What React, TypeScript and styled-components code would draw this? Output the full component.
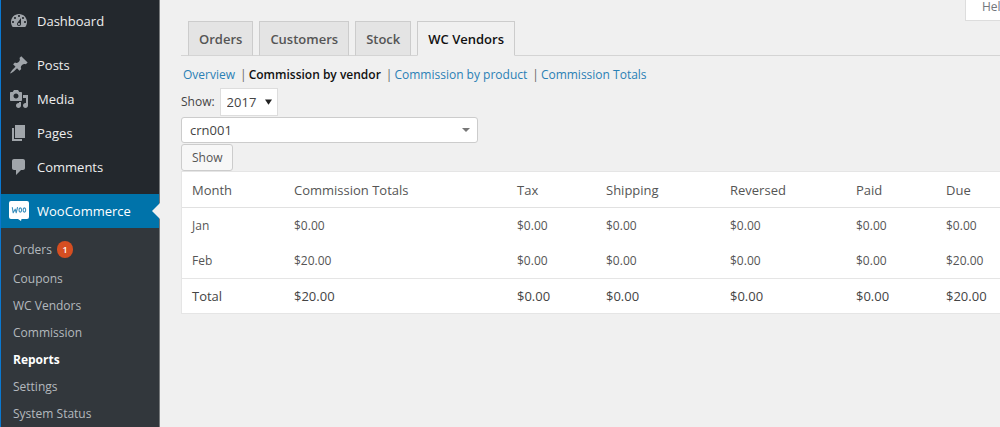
import React from 'react';
import styled, { createGlobalStyle } from 'styled-components';

const GlobalStyle = createGlobalStyle`
  *, *::before, *::after { box-sizing: border-box; }
  body {
    margin: 0;
    background: #f0f0f0;
    color: #444;
    font-family: 'Segoe UI', 'Open Sans', 'Noto Sans', sans-serif;
    font-size: 13px;
    line-height: 20px;
  }
  ul { list-style: none; margin: 0; padding: 0; }
  a { text-decoration: none; }
  button, select { font: inherit; }
`;

const Page = styled.div`
  display: grid;
  grid-template-columns: 160px minmax(0, 1fr);
  min-height: 100vh;
  overflow: hidden;
`;

const Sidebar = styled.nav`
  background: #23282d;
  border-left: 1px solid #0a78d0;
  border-right: 1px solid #777a7c;
  padding-top: 4px;
`;

const MenuGroup = styled.ul`
  & + & { margin-top: 10px; }
`;

const MenuLink = styled.a<{ $active?: boolean }>`
  position: relative;
  display: flex;
  align-items: center;
  gap: 8px;
  height: 34px;
  padding-left: 8px;
  color: ${(p) => (p.$active ? '#fff' : '#eee')};
  background: ${(p) => (p.$active ? '#0073aa' : 'transparent')};
`;

const MenuIcon = styled.svg`
  width: 20px;
  height: 20px;
  fill: #a0a5aa;
`;

const Pointer = styled.svg`
  position: absolute;
  right: -1px;
  top: 9px;
  width: 8px;
  height: 16px;
  fill: #f0f0f0;
`;

const SubMenu = styled.ul`
  background: #32373c;
  padding-top: 6px;
`;

const SubLink = styled.a<{ $active?: boolean; $tall?: boolean }>`
  display: flex;
  align-items: center;
  gap: 5px;
  height: ${(p) => (p.$tall ? 31 : 27)}px;
  padding-left: 12px;
  font-size: 12px;
  font-weight: ${(p) => (p.$active ? 700 : 400)};
  color: ${(p) => (p.$active ? '#fff' : '#b4b9be')};
`;

const Badge = styled.span`
  width: 16px;
  height: 17px;
  border-radius: 8px;
  background: #d54e21;
  color: #fff;
  font-size: 9px;
  font-weight: 600;
  line-height: 17px;
  text-align: center;
`;

const Main = styled.main`
  display: flex;
  flex-direction: column;
  padding-left: 21px;
  min-width: 0;
`;

const TopBar = styled.div`
  display: flex;
  justify-content: flex-end;
  height: 21px;
`;

const HelpTab = styled.button`
  align-self: flex-start;
  height: 21px;
  margin-right: -40px;
  padding: 0 16px 7px;
  border: 1px solid #ddd;
  border-top: 0;
  background: #fff;
  color: #72777c;
  font-size: 12px;
  line-height: 13px;
  width: 75px;
  text-align: left;
  white-space: nowrap;
`;

const Tabs = styled.nav`
  display: flex;
  gap: 6px;
  padding-left: 7px;
  border-bottom: 1px solid #d4d4d4;
`;

const Tab = styled.a<{ $active?: boolean }>`
  height: 35px;
  margin-bottom: -1px;
  padding: 0 10px;
  border: 1px solid #ccc;
  border-bottom-color: ${(p) => (p.$active ? '#f0f0f0' : '#d4d4d4')};
  background: ${(p) => (p.$active ? '#f0f0f0' : '#e4e4e4')};
  color: ${(p) => (p.$active ? '#111' : '#555')};
  font-weight: 600;
  line-height: 34px;
`;

const ReportLinks = styled.ul`
  display: flex;
  padding-left: 2px;
  margin-top: 9px;
  font-size: 12px;
  color: #666;

  li + li::before { content: '|'; padding: 0 2px 0 5px; }
`;

const ReportLink = styled.a<{ $active?: boolean }>`
  color: ${(p) => (p.$active ? '#111' : '#2a80b5')};
  font-weight: ${(p) => (p.$active ? 600 : 400)};
`;

const Filters = styled.form`
  display: flex;
  flex-direction: column;
  align-items: flex-start;
  gap: 1px;
  margin-top: 3px;
`;

const YearRow = styled.div`
  display: flex;
  align-items: center;
  gap: 5px;
  font-size: 12px;
`;

const SelectBox = styled.span<{ $wide?: boolean }>`
  position: relative;
  display: block;
  width: ${(p) => (p.$wide ? '297px' : '58px')};
  max-width: 100%;

  select {
    display: block;
    appearance: none;
    width: 100%;
    height: ${(p) => (p.$wide ? 26 : 28)}px;
    padding: 0 ${(p) => (p.$wide ? 8 : 6)}px;
    border: 1px solid ${(p) => (p.$wide ? '#ccc' : '#ddd')};
    border-radius: ${(p) => (p.$wide ? 3 : 0)}px;
    background: #fff;
    color: #444;
    font-size: 13px;
  }

  svg {
    position: absolute;
    right: ${(p) => (p.$wide ? 8 : 6)}px;
    top: 11px;
    width: ${(p) => (p.$wide ? 8 : 7)}px;
    height: 6px;
    fill: ${(p) => (p.$wide ? '#777' : '#222')};
    pointer-events: none;
  }
`;

const ShowButton = styled.button`
  height: 27px;
  padding: 0 10px;
  border: 1px solid #ccc;
  border-radius: 3px;
  background: #f7f7f7;
  color: #555;
  font-size: 12px;
`;

const Report = styled.table`
  width: 100%;
  table-layout: fixed;
  border-collapse: separate;
  border-spacing: 0;
  border: 1px solid #e5e5e5;
  border-right: 0;
  background: #fff;
  color: #555;

  th, td {
    height: 35px;
    padding: 0 0 0 10px;
    font-weight: 400;
    text-align: left;
    white-space: nowrap;
  }
  thead th { height: 36px; border-bottom: 1px solid #e1e1e1; }
  tbody th, tbody td { font-size: 12px; }
  tfoot th, tfoot td { border-top: 1px solid #e5e5e5; color: #444; }
`;

const Column = styled.col<{ $width?: number }>`
  width: ${(p) => (p.$width ? `${p.$width}px` : 'auto')};
`;

const icons = {
  dashboard:
    'M3.76 16h12.48c1.1-1.37 1.76-3.11 1.76-5 0-4.42-3.58-8-8-8s-8 3.58-8 8c0 1.89.66 3.63 1.76 5zM10 4c.55 0 1 .45 1 1s-.45 1-1 1-1-.45-1-1 .45-1 1-1zM6 6c.55 0 1 .45 1 1s-.45 1-1 1-1-.45-1-1 .45-1 1-1zm8 0c.55 0 1 .45 1 1s-.45 1-1 1-1-.45-1-1 .45-1 1-1zm-5.37 5.55L12 7v6c0 1.1-.9 2-2 2s-2-.9-2-2c0-.57.24-1.08.63-1.45zM4 10c.55 0 1 .45 1 1s-.45 1-1 1-1-.45-1-1 .45-1 1-1zm12 0c.55 0 1 .45 1 1s-.45 1-1 1-1-.45-1-1 .45-1 1-1zm-5 3c0-.55-.45-1-1-1s-1 .45-1 1 .45 1 1 1 1-.45 1-1z',
  posts:
    'M10.44 3.02l1.82-1.82 6.36 6.35-1.83 1.82c-1.05-.68-2.48-.57-3.41.36l-.75.75c-.92.93-1.04 2.35-.35 3.41l-1.83 1.82-2.41-2.41-2.8 2.79c-.42.42-3.38 2.71-3.8 2.29s1.86-3.39 2.28-3.81l2.79-2.79L4.1 9.36l1.83-1.82c1.05.69 2.48.57 3.4-.36l.75-.75c.93-.92 1.05-2.35.36-3.41z',
  media:
    'M13 11V4c0-.55-.45-1-1-1h-1.67L9 1H5L3.67 3H2c-.55 0-1 .45-1 1v7c0 .55.45 1 1 1h10c.55 0 1-.45 1-1zM7 4.5c1.38 0 2.5 1.12 2.5 2.5S8.38 9.5 7 9.5 4.5 8.38 4.5 7 5.62 4.5 7 4.5zM14 6h5v10.5c0 1.38-1.12 2.5-2.5 2.5S14 17.88 14 16.5s1.12-2.5 2.5-2.5c.17 0 .34.02.5.05V9h-3V6zm-4 8.05V13h2v3.5c0 1.38-1.12 2.5-2.5 2.5S7 17.88 7 16.5 8.12 14 9.5 14c.17 0 .34.02.5.05z',
  pages: 'M6 15V2h10v13H6zm-1 1h8v2H3V5h2v11z',
  comments:
    'M5 2h9c1.1 0 2 .9 2 2v7c0 1.1-.9 2-2 2h-2l-5 5v-5H5c-1.1 0-2-.9-2-2V4c0-1.1.9-2 2-2z',
};

const contentMenu: { label: string; icon: keyof typeof icons }[] = [
  { label: 'Posts', icon: 'posts' },
  { label: 'Media', icon: 'media' },
  { label: 'Pages', icon: 'pages' },
  { label: 'Comments', icon: 'comments' },
];

const storeMenu = ['Orders', 'Coupons', 'WC Vendors', 'Commission', 'Reports', 'Settings', 'System Status'];
const tabs = ['Orders', 'Customers', 'Stock', 'WC Vendors'];
const reports = ['Overview', 'Commission by vendor', 'Commission by product', 'Commission Totals'];
const columns: { label: string; width?: number }[] = [
  { label: 'Month', width: 102 },
  { label: 'Commission Totals', width: 223 },
  { label: 'Tax', width: 89 },
  { label: 'Shipping', width: 124 },
  { label: 'Reversed', width: 126 },
  { label: 'Paid', width: 90 },
  { label: 'Due' },
];
const months = [
  ['Jan', '$0.00', '$0.00', '$0.00', '$0.00', '$0.00', '$0.00'],
  ['Feb', '$20.00', '$0.00', '$0.00', '$0.00', '$0.00', '$20.00'],
];
const totals = ['Total', '$20.00', '$0.00', '$0.00', '$0.00', '$0.00', '$20.00'];

function MenuItem({ label, icon }: { label: string; icon: keyof typeof icons }) {
  return (
    <li>
      <MenuLink href="#">
        <MenuIcon viewBox="0 0 20 20" aria-hidden="true">
          <path d={icons[icon]} />
        </MenuIcon>
        {label}
      </MenuLink>
    </li>
  );
}

function WooIcon() {
  return (
    <MenuIcon viewBox="0 0 20 20" aria-hidden="true">
      <path fill="#fff" d="M2 0h16a2 2 0 0 1 2 2v14a2 2 0 0 1-2 2h-5.500l-.5 2-3-2H2a2 2 0 0 1-2-2V2a2 2 0 0 1 2-2z" />
      <g fill="none" stroke="#3a8fbd" strokeWidth="1.100" strokeLinecap="round" strokeLinejoin="round">
        <path d="M3.300 6.500l.9 5.300 2-3.600 1 3.600 1.300-5.300" />
        <ellipse cx="11.300" cy="9" rx="1.300" ry="2.100" />
        <ellipse cx="15.400" cy="9" rx="1.300" ry="2.100" />
      </g>
    </MenuIcon>
  );
}

function Cells({ values }: { values: string[] }) {
  return (
    <tr>
      {values.map((value, i) => (i === 0 ? <th key={i} scope="row">{value}</th> : <td key={i}>{value}</td>))}
    </tr>
  );
}

export default function App() {
  return (
    <>
      <GlobalStyle />
      <Page>
        <Sidebar aria-label="Admin menu">
          <MenuGroup>
            <MenuItem label="Dashboard" icon="dashboard" />
          </MenuGroup>
          <MenuGroup>
            {contentMenu.map((item) => (
              <MenuItem key={item.label} {...item} />
            ))}
          </MenuGroup>
          <MenuGroup>
            <li>
              <MenuLink href="#" $active>
                <WooIcon />
                WooCommerce
                <Pointer viewBox="0 0 8 16" aria-hidden="true">
                  <path d="M8 0v16L0 8z" />
                </Pointer>
              </MenuLink>
              <SubMenu>
                {storeMenu.map((label) => (
                  <li key={label}>
                    <SubLink href="#" $active={label === 'Reports'} $tall={label === 'Orders'}>
                      {label}
                      {label === 'Orders' && <Badge>1</Badge>}
                    </SubLink>
                  </li>
                ))}
              </SubMenu>
            </li>
          </MenuGroup>
        </Sidebar>
        <Main>
          <TopBar>
            <HelpTab type="button">Help</HelpTab>
          </TopBar>
          <Tabs aria-label="Report sections">
            {tabs.map((label) => (
              <Tab key={label} href="#" $active={label === 'WC Vendors'}>{label}</Tab>
            ))}
          </Tabs>
          <ReportLinks>
            {reports.map((label) => (
              <li key={label}>
                <ReportLink href="#" $active={label === 'Commission by vendor'}>{label}</ReportLink>
              </li>
            ))}
          </ReportLinks>
          <Filters onSubmit={(e: React.FormEvent) => e.preventDefault()}>
            <YearRow>
              <label htmlFor="year">Show:</label>
              <SelectBox>
                <select id="year" defaultValue="2017">
                  <option>2017</option>
                </select>
                <svg viewBox="0 0 8 6" aria-hidden="true"><path d="M0 0h8L4 6z" /></svg>
              </SelectBox>
            </YearRow>
            <SelectBox $wide>
              <select aria-label="Vendor" defaultValue="crn001">
                <option>crn001</option>
              </select>
              <svg viewBox="0 0 8 6" aria-hidden="true"><path d="M0 0h8L4 4z" /></svg>
            </SelectBox>
            <ShowButton type="submit">Show</ShowButton>
          </Filters>
          <Report>
            <colgroup>
              {columns.map((c) => <Column key={c.label} $width={c.width} />)}
            </colgroup>
            <thead>
              <tr>{columns.map((c) => <th key={c.label} scope="col">{c.label}</th>)}</tr>
            </thead>
            <tbody>
              {months.map((row) => <Cells key={row[0]} values={row} />)}
            </tbody>
            <tfoot>
              <Cells values={totals} />
            </tfoot>
          </Report>
        </Main>
      </Page>
    </>
  );
}
